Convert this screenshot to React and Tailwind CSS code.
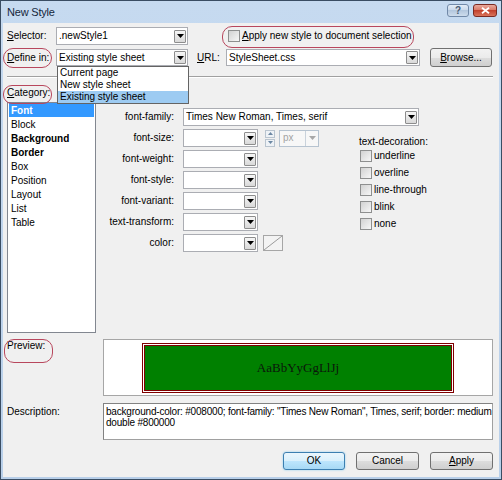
import React from "react";

const Arrow = ({ color = "#000" }) => (
  <svg width="7" height="4" viewBox="0 0 7 4">
    <polygon points="0,0 7,0 3.5,4" fill={color} />
  </svg>
);

function Combo({ className = "", text = "", textClass = "" }) {
  return (
    <div className={`flex items-center bg-white border border-[#abadb3] pl-[2px] pr-[1px] shrink-0 ${className}`}>
      <span className={`flex-1 truncate leading-[12px] ${textClass}`}>{text}</span>
      <div className="w-[12px] h-[13px] border border-[#8d8d8d] rounded-[1px] bg-[linear-gradient(#f6f6f6,#d9d9d9)] flex items-center justify-center shrink-0">
        <Arrow />
      </div>
    </div>
  );
}

const Check = () => (
  <div className="w-[12px] h-[12px] border border-[#8e8f8f] bg-[linear-gradient(135deg,#d2d2d2,#f7f7f7)] shrink-0" />
);

function Btn({ children, className = "" }) {
  return (
    <div className={`flex items-center justify-center border rounded-[3px] shrink-0 ${className}`}>
      {children}
    </div>
  );
}

const normalBtn =
  "border-[#707070] bg-[linear-gradient(#f2f2f2_0%,#ebebeb_50%,#dddddd_50%,#cfcfcf_100%)]";

function Row({ label, children }) {
  return (
    <div className="h-[18px] flex items-center">
      <div className="w-[78px] text-right shrink-0">{label}</div>
      <div className="ml-[9px] flex items-center">{children}</div>
    </div>
  );
}

export default function App() {
  const cats = [
    ["Font", true],
    ["Block", false],
    ["Background", true],
    ["Border", true],
    ["Box", false],
    ["Position", false],
    ["Layout", false],
    ["List", false],
    ["Table", false],
  ];
  const decos = ["underline", "overline", "line-through", "blink", "none"];

  return (
    <div className="w-[502px] h-[480px] relative flex flex-col border border-[#3a4d63] bg-[linear-gradient(#c6daf0,#b8cfe9)] font-['Liberation_Sans',Arial,sans-serif] text-[10px] leading-[12px] text-black overflow-hidden">
      {/* Title bar */}
      <div className="h-[22px] flex pl-[6px] pr-[4px] shrink-0">
        <span className="mt-[5px] text-[11px] leading-[13px] tracking-[-0.2px] text-[#15263b]">New Style</span>
        <div className="ml-auto mt-[3px] flex gap-[4px]">
          <div className="w-[22px] h-[13px] rounded-[3px] border border-[#7189a8] bg-[linear-gradient(#e4edf7,#c8d7e9_50%,#b3c7de_50%,#cddcec)] flex items-center justify-center text-[10px] leading-[10px] text-[#4a5a70] font-bold">
            ?
          </div>
          <div className="w-[24px] h-[13px] rounded-[3px] border border-[#7a2a22] bg-[linear-gradient(#e9a99c,#d77462_50%,#c2412d_50%,#d9735a)] flex items-center justify-center">
            <svg width="9" height="7" viewBox="0 0 9 7">
              <path d="M1 0.8 L8 6.2 M8 0.8 L1 6.2" stroke="#ffffff" strokeWidth="1.8" />
            </svg>
          </div>
        </div>
      </div>

      {/* Content */}
      <div className="flex-1 mx-[2px] mb-[2px] bg-[#f0f0f0] relative flex flex-col pl-[4px] pr-[6px]">
        {/* Row 1 */}
        <div className="mt-[4px] h-[18px] flex items-center">
          <div className="w-[49px] shrink-0">
            <span className="underline">S</span>elector:
          </div>
          <Combo className="w-[132px] h-[18px]" text=".newStyle1" />
          <div className="ml-[40px] flex items-center">
            <Check />
            <span className="ml-[2px]">
              <span className="underline">A</span>pply new style to document selection
            </span>
          </div>
        </div>

        {/* Row 2 */}
        <div className="mt-[3px] h-[19px] flex items-center">
          <div className="w-[49px] shrink-0">
            <span className="underline">D</span>efine in:
          </div>
          <Combo className="w-[132px] h-[17px]" text="Existing style sheet" />
          <div className="ml-[9px] w-[29px] shrink-0">
            <span className="underline">U</span>RL:
          </div>
          <Combo className="w-[194px] h-[17px]" text="StyleSheet.css" />
          <Btn className={`ml-[10px] w-[62px] h-[19px] ${normalBtn}`}>
            <span>
              <span className="underline">B</span>rowse...
            </span>
          </Btn>
        </div>

        {/* Separator */}
        <div className="mt-[9px] h-[2px] border-t border-[#a0a0a0] border-b border-b-white" />

        {/* Main area */}
        <div className="mt-[9px] flex">
          <div className="w-[89px] shrink-0 flex flex-col">
            <div className="h-[12px]">
              <span className="underline">C</span>ategory:
            </div>
            <div className="mt-[3px] h-[231px] border border-[#828790] bg-white px-[1px]">
              {cats.map(([c, b], i) => (
                <div
                  key={c}
                  className={`h-[14px] leading-[15px] pl-[2px] ${b ? "font-bold" : ""} ${
                    i === 0 ? "bg-[#3399ff] text-white" : ""
                  }`}
                >
                  {c}
                </div>
              ))}
            </div>
          </div>

          <div className="flex-1 flex flex-col mt-[21px]">
            <Row label="font-family:">
              <Combo className="w-[236px] h-[18px]" text="Times New Roman, Times, serif" />
            </Row>
            <div className="mt-[3px] flex">
              <div className="w-[263px] shrink-0 flex flex-col gap-[3px]">
                <Row label="font-size:">
                  <Combo className="w-[75px] h-[18px]" />
                  <div className="ml-[7px] w-[10px] h-[17px] flex flex-col gap-px">
                    <div className="flex-1 border border-[#b9c4cf] bg-[#eef2f6] flex items-center justify-center">
                      <svg width="5" height="3" viewBox="0 0 5 3">
                        <polygon points="0,3 5,3 2.5,0" fill="#6c87a3" />
                      </svg>
                    </div>
                    <div className="flex-1 border border-[#b9c4cf] bg-[#eef2f6] flex items-center justify-center">
                      <svg width="5" height="3" viewBox="0 0 5 3">
                        <polygon points="0,0 5,0 2.5,3" fill="#6c87a3" />
                      </svg>
                    </div>
                  </div>
                  <div className="ml-[4px] w-[40px] h-[17px] border border-[#b6c3d0] bg-[#f7f7f7] flex items-center">
                    <span className="flex-1 pl-[3px] text-[#a3a3a3]">px</span>
                    <div className="w-[13px] h-full border-l border-[#c9d2db] flex items-center justify-center">
                      <Arrow color="#a8a8a8" />
                    </div>
                  </div>
                </Row>
                <Row label="font-weight:">
                  <Combo className="w-[75px] h-[18px]" />
                </Row>
                <Row label="font-style:">
                  <Combo className="w-[75px] h-[18px]" />
                </Row>
                <Row label="font-variant:">
                  <Combo className="w-[75px] h-[18px]" />
                </Row>
                <Row label="text-transform:">
                  <Combo className="w-[75px] h-[18px]" />
                </Row>
                <Row label="color:">
                  <Combo className="w-[75px] h-[18px]" />
                  <div className="ml-[5px] w-[20px] h-[16px] border border-[#a6a6a6] bg-[#f3f3f3]">
                    <svg width="18" height="14" viewBox="0 0 18 14" className="block">
                      <line x1="0" y1="14" x2="18" y2="0" stroke="#9a9a9a" strokeWidth="1" />
                    </svg>
                  </div>
                </Row>
              </div>
              <div className="mt-[7px] flex flex-col">
                <div className="h-[11px] leading-[11px]">text-decoration:</div>
                {decos.map((d) => (
                  <div key={d} className="h-[17px] flex items-center ml-[1px]">
                    <Check />
                    <span className="ml-[2px]">{d}</span>
                  </div>
                ))}
              </div>
            </div>
          </div>
        </div>

        {/* Preview */}
        <div className="mt-[6px] flex">
          <div className="w-[96px] shrink-0 pt-[1px]">Preview:</div>
          <div className="w-[390px] h-[57px] border border-[#a6a6a6] bg-white flex items-center justify-center">
            <div className="w-[312px] h-[50px] border-[3px] border-double border-[#800000] bg-[#008000] bg-clip-padding flex items-center justify-center font-['Liberation_Serif','Times_New_Roman',serif] text-[13px] text-[#0b160b]">
              AaBbYyGgLlJj
            </div>
          </div>
        </div>

        {/* Description */}
        <div className="mt-[7px] flex">
          <div className="w-[96px] shrink-0 pt-[3px]">Description:</div>
          <div className="w-[390px] h-[37px] border border-[#a0a0a0] border-t-[#828282] border-l-[#828282] bg-white pl-[2px] pt-[2px] leading-[11px] whitespace-nowrap tracking-[-0.2px] overflow-hidden">
            background-color: #008000; font-family: "Times New Roman", Times, serif; border: medium
            <br />
            double #800000
          </div>
        </div>

        {/* Buttons */}
        <div className="mt-[12px] flex justify-end gap-[11px]">
          <Btn className="w-[62px] h-[18px] border-[#3c7fb1] bg-[linear-gradient(#eaf6fd_0%,#d9f0fc_50%,#bee6fd_50%,#a7d9f5_100%)] shadow-[0_0_2px_#7fc8f0]">
            OK
          </Btn>
          <Btn className={`w-[63px] h-[18px] ${normalBtn}`}>Cancel</Btn>
          <Btn className={`w-[63px] h-[18px] ${normalBtn}`}>
            <span>
              <span className="underline">A</span>pply
            </span>
          </Btn>
        </div>

        {/* Open dropdown list */}
        <div className="absolute left-[54px] top-[43px] w-[132px] border border-[#646464] bg-white">
          <div className="h-[12px] leading-[12px] pl-[2px]">Current page</div>
          <div className="h-[12px] leading-[12px] pl-[2px]">New style sheet</div>
          <div className="h-[12px] leading-[12px] pl-[2px] bg-[#9dcbf2]">Existing style sheet</div>
        </div>
      </div>

      {/* Red annotation ovals */}
      <div className="absolute left-[2px] top-[47px] w-[49px] h-[20px] rounded-[10px] border border-[#b8475d] pointer-events-none" />
      <div className="absolute left-[2px] top-[84px] w-[49px] h-[19px] rounded-[9px] border border-[#b8475d] pointer-events-none" />
      <div className="absolute left-[3px] top-[338px] w-[49px] h-[24px] rounded-[10px] border border-[#b8475d] pointer-events-none" />
      <div className="absolute left-[221px] top-[25px] w-[192px] h-[22px] rounded-[10px] border border-[#b8475d] pointer-events-none" />
    </div>
  );
}
